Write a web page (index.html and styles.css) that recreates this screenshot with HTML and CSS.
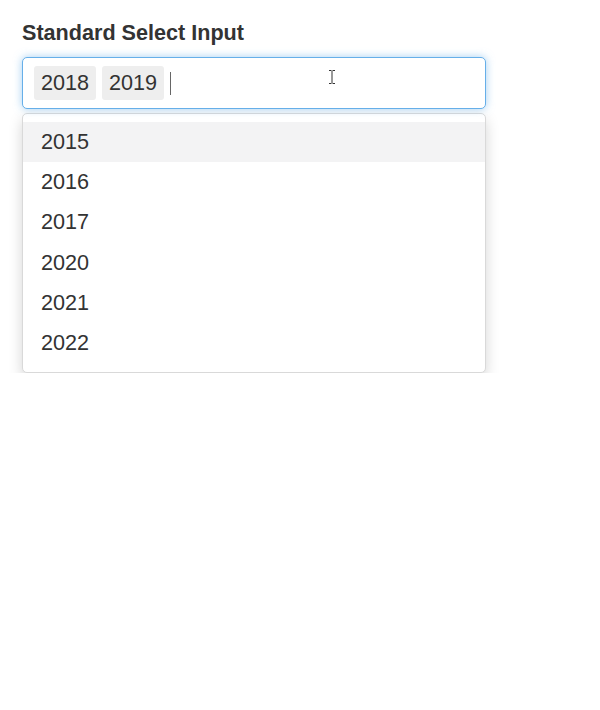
FILE: index.html
```html
<!DOCTYPE html>
<html>
<head>
<meta charset="utf-8">
<link rel="stylesheet" href="styles.css">
</head>
<body>
<div class="wrap">
  <label class="title">Standard Select Input</label>
  <div class="select">
    <div class="control">
      <span class="tag">2018</span>
      <span class="tag">2019</span>
      <span class="caret"></span>
      <svg class="ibeam" width="8" height="14" viewBox="0 0 8 14"><path d="M1 0.5h2.5M4.5 0.5H7M4 1v12M1 13.5h2.5M4.5 13.5H7" stroke="#333" stroke-width="1" fill="none"/></svg>
    </div>
    <ul class="menu">
      <li class="item active">2015</li>
      <li class="item">2016</li>
      <li class="item">2017</li>
      <li class="item">2020</li>
      <li class="item">2021</li>
      <li class="item">2022</li>
    </ul>
  </div>
</div>
</body>
</html>
```
FILE: styles.css
```css
html, body {
  margin: 0;
  padding: 0;
  background: #fff;
}
body {
  font-family: "Liberation Sans", Arial, sans-serif;
  color: #333;
}
.wrap {
  padding: 20px 0 0 22px;
  width: 464px;
}
.title {
  display: block;
  font-weight: bold;
  font-size: 21.6px;
  line-height: 26px;
  margin-bottom: 11px;
}
.select {
  position: relative;
}
.control {
  position: relative;
  display: flex;
  align-items: center;
  gap: 6px;
  height: 50px;
  box-sizing: content-box;
  border: 1px solid #66afe9;
  border-radius: 5px;
  padding: 0 11px;
  box-shadow: 0 0 8px rgba(102, 175, 233, 0.6);
  background: #fff;
}
.tag {
  background: #eeeeee;
  border-radius: 3px;
  height: 34px;
  line-height: 34px;
  padding: 0 7px;
  font-size: 21.6px;
  color: #333;
}
.caret {
  width: 1px;
  height: 23px;
  background: #666;
  margin-left: 0;
}
.ibeam {
  position: absolute;
  left: 305px;
  top: 12px;
}
.menu {
  list-style: none;
  margin: 4px 0 0 0;
  padding: 8px 0 9px 0;
  border: 1px solid #d9d9d9;
  border-radius: 5px;
  box-shadow: 0 6px 14px rgba(0, 0, 0, 0.17);
  background: #fff;
}
.item {
  height: 40.2px;
  line-height: 40.2px;
  padding-left: 18px;
  font-size: 21.6px;
  color: #333;
}
.item.active {
  background: #f3f3f4;
}
```
